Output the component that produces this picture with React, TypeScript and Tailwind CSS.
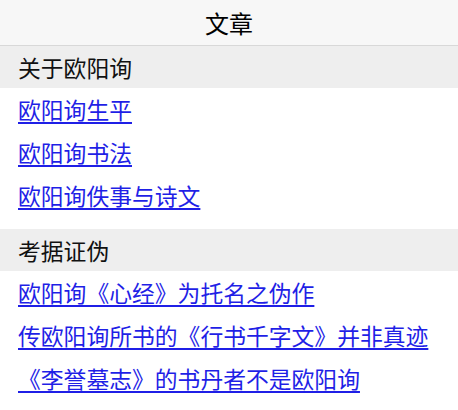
const sections = [
  {
    title: "关于欧阳询",
    links: ["欧阳询生平", "欧阳询书法", "欧阳询佚事与诗文"],
  },
  {
    title: "考据证伪",
    links: [
      "欧阳询《心经》为托名之伪作",
      "传欧阳询所书的《行书千字文》并非真迹",
      "《李誉墓志》的书丹者不是欧阳询",
    ],
  },
]

export default function App() {
  return (
    <div className="min-h-[410px] w-full bg-white font-['Noto_Sans_CJK_SC','Noto_Sans',sans-serif] text-black">
      {/* 标题栏 */}
      <header className="flex h-[46px] items-center justify-center border-b border-[#d8d8d8] bg-[#f7f7f7]">
        <h1 className="text-[24px] leading-none">文章</h1>
      </header>

      {sections.map((section, i) => (
        <section key={i}>
          <div className="flex h-[42px] items-center bg-[#eeeeee] px-[18px] pt-[2px] text-[22.8px] leading-none text-[#111]">
            {section.title}
          </div>
          <ul className={i === 0 ? "pb-[12px]" : ""}>
            {section.links.map((link, j) => (
              <li key={j} className="flex h-[43px] items-center px-[18px] pt-[2px]">
                <a href="#" className="text-[22.8px] leading-none text-[#1f1fe6] underline underline-offset-[3px]">
                  {link}
                </a>
              </li>
            ))}
          </ul>
        </section>
      ))}
    </div>
  )
}
